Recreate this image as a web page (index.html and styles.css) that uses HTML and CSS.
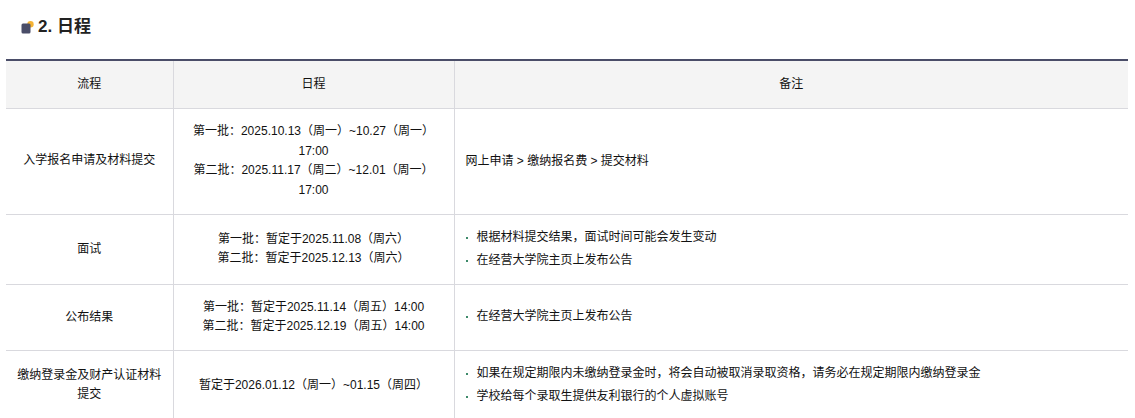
FILE: index.html
```html
<!DOCTYPE html>
<html lang="zh">
<head>
<meta charset="utf-8">
<title>日程</title>
<link rel="stylesheet" href="styles.css">
</head>
<body>
<h2 class="title">
<svg class="title-icon" width="13" height="13" viewBox="0 0 13 13"><circle cx="9.5" cy="3.3" r="3.2" fill="#f5b335"/><rect x="0.5" y="2.5" width="9" height="10" rx="1.5" fill="#4a4d68"/></svg>
<span>2. 日程</span>
</h2>
<table class="schedule">
<colgroup><col class="c1"><col class="c2"><col class="c3"></colgroup>
<thead>
<tr><th>流程</th><th>日程</th><th>备注</th></tr>
</thead>
<tbody>
<tr class="tall">
<td>入学报名申请及材料提交</td>
<td>第一批：2025.10.13（周一）~10.27（周一）17:00<br>第二批：2025.11.17（周二）~12.01（周一）17:00</td>
<td class="note">网上申请 &gt; 缴纳报名费 &gt; 提交材料</td>
</tr>
<tr>
<td>面试</td>
<td>第一批：暂定于2025.11.08（周六）<br>第二批：暂定于2025.12.13（周六）</td>
<td class="note"><ul><li>根据材料提交结果，面试时间可能会发生变动</li><li>在经营大学院主页上发布公告</li></ul></td>
</tr>
<tr>
<td>公布结果</td>
<td>第一批：暂定于2025.11.14（周五）14:00<br>第二批：暂定于2025.12.19（周五）14:00</td>
<td class="note"><ul><li>在经营大学院主页上发布公告</li></ul></td>
</tr>
<tr>
<td>缴纳登录金及财产认证材料提交</td>
<td>暂定于2026.01.12（周一）~01.15（周四）</td>
<td class="note"><ul><li>如果在规定期限内未缴纳登录金时，将会自动被取消录取资格，请务必在规定期限内缴纳登录金</li><li>学校给每个录取生提供友利银行的个人虚拟账号</li></ul></td>
</tr>
</tbody>
</table>
</body>
</html>
```
FILE: styles.css
```css
html, body {
  margin: 0;
  height: 418px;
  overflow: hidden;
  background: #fff;
}
body {
  padding: 0 0 0 6px;
  font-family: "Liberation Sans", "Noto Sans CJK SC", sans-serif;
  font-size: 12px;
  line-height: 19.5px;
  color: #111;
  box-sizing: border-box;
}
.title {
  display: flex;
  align-items: center;
  gap: 4px;
  margin: 0;
  padding: 11px 0 0 15px;
  height: 43px;
  box-sizing: border-box;
  font-size: 17px;
  line-height: 22px;
  font-weight: 700;
  color: #222;
}
.title-icon {
  flex: none;
  margin-top: 1px;
}
.schedule {
  margin-top: 16px;
  width: 1122px;
  table-layout: fixed;
  border-collapse: collapse;
  border-top: 2px solid #4a4d68;
}
.c1 { width: 167px; }
.c2 { width: 281px; }
th, td {
  border-bottom: 1px solid #d9d9de;
  border-left: 1px solid #d9d9de;
  text-align: center;
  vertical-align: middle;
  font-weight: 400;
  padding: 12.75px 11px 13.25px;
}
th:first-child, td:first-child { border-left: 0; }
th {
  background: #f4f4f4;
  padding: 13.75px 11px;
}
.tall td { padding-top: 13px; padding-bottom: 14px; }
td.note {
  text-align: left;
  padding: 9.5px 11px;
}
ul {
  list-style: none;
  margin: 0;
  padding: 3px 0 0;
}
li {
  position: relative;
  padding-left: 11px;
  margin-bottom: 4px;
}
li::before {
  content: "";
  position: absolute;
  left: 0;
  top: 9px;
  width: 2px;
  height: 2px;
  background: #3d8a6a;
}
```
